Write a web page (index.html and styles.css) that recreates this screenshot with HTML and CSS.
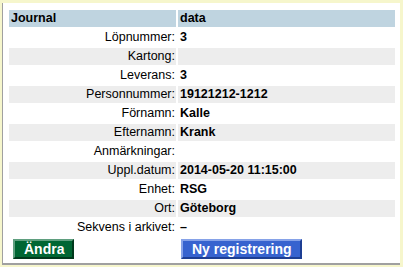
FILE: index.html
```html
<!DOCTYPE html>
<html lang="sv">
<head>
<meta charset="utf-8">
<title>Journal</title>
<link rel="stylesheet" href="styles.css">
</head>
<body>
<div class="frame">
  <table class="journal">
    <thead>
      <tr class="head">
        <th class="h-label">Journal</th>
        <th class="h-data">data</th>
      </tr>
    </thead>
    <tbody>
      <tr><td class="label">Löpnummer:</td><td class="value">3</td></tr>
      <tr class="alt"><td class="label">Kartong:</td><td class="value"></td></tr>
      <tr><td class="label">Leverans:</td><td class="value">3</td></tr>
      <tr class="alt"><td class="label">Personnummer:</td><td class="value">19121212-1212</td></tr>
      <tr><td class="label">Förnamn:</td><td class="value">Kalle</td></tr>
      <tr class="alt"><td class="label">Efternamn:</td><td class="value">Krank</td></tr>
      <tr><td class="label">Anmärkningar:</td><td class="value"></td></tr>
      <tr class="alt"><td class="label">Uppl.datum:</td><td class="value">2014-05-20 11:15:00</td></tr>
      <tr><td class="label">Enhet:</td><td class="value">RSG</td></tr>
      <tr class="alt"><td class="label">Ort:</td><td class="value">Göteborg</td></tr>
      <tr><td class="label">Sekvens i arkivet:</td><td class="value">–</td></tr>
      <tr class="actions">
        <td class="act-left"><button class="btn btn-green" type="button">Ändra</button></td>
        <td class="act-right"><button class="btn btn-blue" type="button">Ny registrering</button></td>
      </tr>
    </tbody>
  </table>
</div>
</body>
</html>
```
FILE: styles.css
```css
html, body {
  margin: 0;
  padding: 0;
}
body {
  background: #f6f6cc;
  font-family: "Liberation Sans", Arial, sans-serif;
  font-size: 12.5px;
  color: #000;
  height: 267px;
  overflow: hidden;
}
.frame {
  background: #fff;
  margin: 3px 3px 2px 2px;
  border-left: 1px solid #a0a0a0;
  border-bottom: 2px solid #a0a0a0;
  padding: 5px 3px 1px 4px;
}
.journal {
  border-collapse: separate;
  border-spacing: 2px;
  width: 390px;
  table-layout: fixed;
}
.journal th,
.journal td {
  height: 17px;
  line-height: 15px;
  padding: 1px 2px;
  box-sizing: border-box;
  white-space: nowrap;
  vertical-align: middle;
}
.head th {
  background: #bfd4e0;
  font-weight: bold;
  text-align: left;
}
.h-label { width: 167px; }
.h-data { width: 217px; }
.journal td.label {
  text-align: right;
  padding-right: 1px;
}
.journal td.value {
  font-weight: bold;
}
.alt td {
  background: #ededed;
}
.actions td {
  height: 22px;
  padding: 1px 0;
}
.journal td.act-left { padding-left: 4px; }
.journal td.act-right { padding-left: 3px; }
.btn {
  display: block;
  margin: 0;
  font-family: "Liberation Sans", Arial, sans-serif;
  font-size: 14px;
  font-weight: bold;
  line-height: 16px;
  height: 20px;
  padding: 0 9px;
  color: #fff;
  border-width: 2px;
  border-style: solid;
  box-sizing: border-box;
  cursor: pointer;
}
.btn-green {
  background: #006633;
  border-color: #5f9f7f #00391c #00391c #5f9f7f;
  width: 61px;
}
.btn-blue {
  background: #3763cf;
  border-color: #86a2e8 #1d3e93 #1d3e93 #86a2e8;
  width: 121px;
}
```
